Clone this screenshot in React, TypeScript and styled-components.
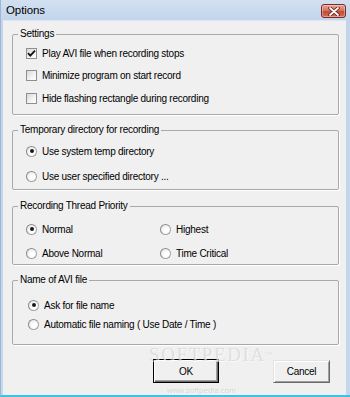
import React from "react";
import styled, { createGlobalStyle } from "styled-components";

const Global = createGlobalStyle`
  html, body { margin: 0; padding: 0; background: #ffffff; }
  body { font-family: "Liberation Sans", Arial, sans-serif; }
  * { box-sizing: border-box; }
`;

const Window = styled.div`
  position: relative;
  width: 350px;
  height: 397px;
  display: flex;
  flex-direction: column;
  background: linear-gradient(#d2e0f1, #c2d5ec 22px, #c4d7ee);
  border-left: 1px solid #9fb6d3;
  border-bottom: 2px solid #3cc4e6;
  overflow: hidden;
`;

const TitleBar = styled.div`
  height: 20px;
  flex: none;
  display: flex;
  align-items: center;
  justify-content: space-between;
  padding: 0 4px 0 5px;
`;

const Title = styled.span`
  font-size: 11.5px;
  color: #000;
  letter-spacing: -0.1px;
`;

const CloseButton = styled.div`
  width: 25px;
  height: 14px;
  margin-top: 2px;
  border: 1px solid #7d2a22;
  border-radius: 3px;
  background: linear-gradient(#e8a394, #d67663 45%, #c44a37 55%, #d0705b);
  display: flex;
  align-items: center;
  justify-content: center;
  box-shadow: inset 0 0 0 1px rgba(255, 255, 255, 0.35);
`;

const Client = styled.div`
  flex: 1;
  margin: 0 4px 0 2px;
  background: #f0f0f0;
  border-top: 1px solid #dde6f2;
  padding: 7px 7px 0 9px;
  display: flex;
  flex-direction: column;
`;

const Group = styled.fieldset<{ $mt: number; $pt: number; $pb: number; $pl: number; $gap: number }>`
  margin: ${(p) => p.$mt}px 0 0;
  padding: ${(p) => p.$pt}px 8px ${(p) => p.$pb}px ${(p) => p.$pl}px;
  border: 1px solid #a9a9a9;
  border-radius: 2px;
  box-shadow: 1px 1px 0 #ffffff;
  min-width: 0;
  display: flex;
  flex-direction: column;
  gap: ${(p) => p.$gap}px;
`;

const Legend = styled.legend<{ $ml: number }>`
  margin-left: ${(p) => p.$ml}px;
  padding: 0 2px;
  font-size: 10px;
  line-height: 12px;
  letter-spacing: -0.25px;
  color: #000;
`;

const Option = styled.div`
  display: flex;
  align-items: center;
  height: 18px;
  gap: 5px;
  font-size: 10px;
  letter-spacing: -0.25px;
  color: #000;
  white-space: nowrap;
`;

const CheckBox = styled.span`
  width: 11px;
  height: 11px;
  flex: none;
  border: 1px solid #8e8f8f;
  background: linear-gradient(135deg, #d8d8d8, #f4f4f4 60%, #ffffff);
  display: flex;
  align-items: center;
  justify-content: center;
`;

const Radio = styled.span<{ $on?: boolean }>`
  width: 11px;
  height: 11px;
  flex: none;
  border-radius: 50%;
  border: 1px solid #a3a3a3;
  border-top-color: #8a8a8a;
  border-left-color: #8a8a8a;
  background: radial-gradient(circle at 65% 65%, #ffffff 30%, #e2e2e2 90%);
  display: flex;
  align-items: center;
  justify-content: center;
  &::after {
    content: "";
    width: 4px;
    height: 4px;
    border-radius: 50%;
    background: ${(p) => (p.$on ? "#1a1a1a" : "transparent")};
  }
`;

const Grid = styled.div`
  display: grid;
  grid-template-columns: 134px auto;
  row-gap: 6px;
`;

const ButtonRow = styled.div`
  display: flex;
  justify-content: flex-end;
  align-items: center;
  gap: 54px;
  margin-top: 14px;
  padding-right: 9px;
`;

const Button = styled.div<{ $w: number; $h: number; $default?: boolean }>`
  width: ${(p) => p.$w}px;
  height: ${(p) => p.$h}px;
  display: flex;
  align-items: center;
  justify-content: center;
  font-size: 10px;
  letter-spacing: -0.25px;
  color: #000;
  background: #f0f0f0;
  border: 1px solid;
  border-color: ${(p) => (p.$default ? "#000 #000 #000 #000" : "#e3e3e3 #696969 #696969 #e3e3e3")};
  box-shadow: ${(p) =>
    p.$default
      ? "inset 1px 1px 0 #ffffff, inset -1px -1px 0 #696969, inset -2px -2px 0 #a0a0a0"
      : "inset 1px 1px 0 #ffffff, inset -1px -1px 0 #a0a0a0"};
`;

const Watermark = styled.div`
  position: absolute;
  left: 148px;
  top: 345px;
  pointer-events: none;
  display: flex;
  flex-direction: column;
  align-items: flex-start;
  font-family: "Liberation Serif", "Times New Roman", serif;
  color: rgba(205, 205, 205, 0.55);
  text-shadow: 1px 1px 0 rgba(255, 255, 255, 0.6);
`;

const WatermarkBig = styled.span`
  font-size: 19px;
  letter-spacing: 1.6px;
  line-height: 20px;
`;

const Tm = styled.span`
  font-size: 7px;
  vertical-align: top;
  letter-spacing: 0;
`;

const WatermarkSmall = styled.span`
  margin-top: 21px;
  margin-left: 18px;
  font-family: "Liberation Sans", Arial, sans-serif;
  font-size: 8px;
  color: rgba(175, 175, 175, 0.45);
`;

const Check = () => (
  <svg width="9" height="9" viewBox="0 0 9 9">
    <path d="M1 4.2 L3.3 6.6 L8 1.6" fill="none" stroke="#111" strokeWidth="1.8" />
  </svg>
);

const CloseX = () => (
  <svg width="12" height="9" viewBox="0 0 12 9">
    <path d="M2 1 L10 8 M10 1 L2 8" stroke="#5a1a14" strokeWidth="3.4" strokeLinecap="round" />
    <path d="M2 1 L10 8 M10 1 L2 8" stroke="#ffffff" strokeWidth="1.8" strokeLinecap="round" />
  </svg>
);

export default function App() {
  return (
    <>
      <Global />
      <Window>
        <TitleBar>
          <Title>Options</Title>
          <CloseButton>
            <CloseX />
          </CloseButton>
        </TitleBar>
        <Client>
          <Group $mt={0} $pt={4} $pb={7} $pl={13} $gap={4.5}>
            <Legend $ml={-8}>Settings</Legend>
            <Option>
              <CheckBox>
                <Check />
              </CheckBox>
              Play AVI file when recording stops
            </Option>
            <Option>
              <CheckBox />
              Minimize program on start record
            </Option>
            <Option>
              <CheckBox />
              Hide flashing rectangle during recording
            </Option>
          </Group>

          <Group $mt={9} $pt={6} $pb={4} $pl={13} $gap={7}>
            <Legend $ml={-8}>Temporary directory for recording</Legend>
            <Option>
              <Radio $on />
              Use system temp directory
            </Option>
            <Option>
              <Radio />
              Use user specified directory ...
            </Option>
          </Group>

          <Group $mt={10} $pt={8} $pb={2} $pl={13} $gap={0}>
            <Legend $ml={-8}>Recording Thread Priority</Legend>
            <Grid>
              <Option>
                <Radio $on />
                Normal
              </Option>
              <Option>
                <Radio />
                Highest
              </Option>
              <Option>
                <Radio />
                Above Normal
              </Option>
              <Option>
                <Radio />
                Time Critical
              </Option>
            </Grid>
          </Group>

          <Group $mt={9} $pt={10} $pb={11} $pl={15} $gap={1}>
            <Legend $ml={-10}>Name of AVI file</Legend>
            <Option>
              <Radio $on />
              Ask for file name
            </Option>
            <Option>
              <Radio />
              Automatic file naming ( Use Date / Time )
            </Option>
          </Group>

          <ButtonRow>
            <Button $w={66} $h={24} $default>
              OK
            </Button>
            <Button $w={57} $h={23}>
              Cancel
            </Button>
          </ButtonRow>
        </Client>
        <Watermark>
          <WatermarkBig>
            SOFTPEDIA<Tm>™</Tm>
          </WatermarkBig>
          <WatermarkSmall>www.softpedia.com</WatermarkSmall>
        </Watermark>
      </Window>
    </>
  );
}
